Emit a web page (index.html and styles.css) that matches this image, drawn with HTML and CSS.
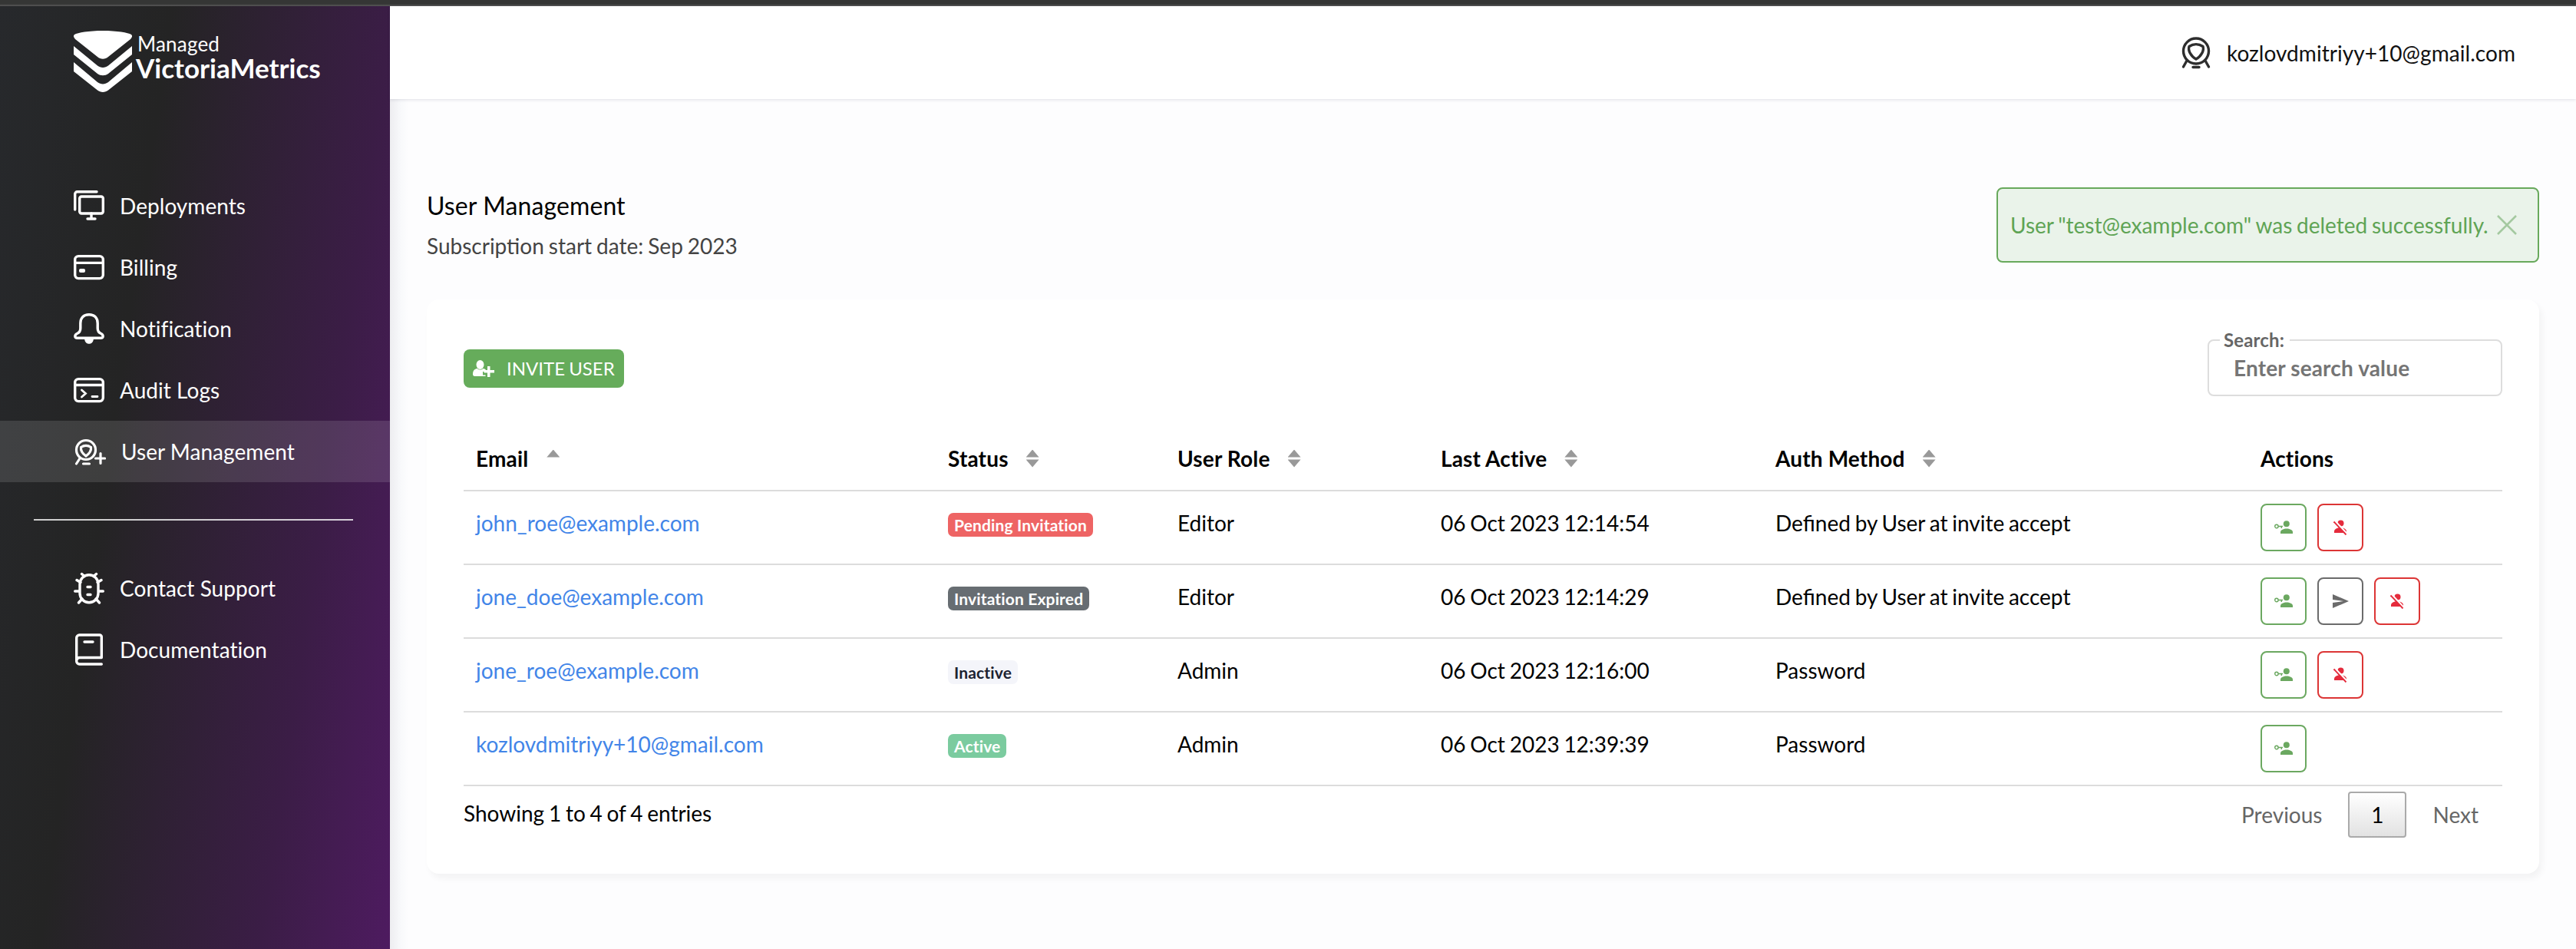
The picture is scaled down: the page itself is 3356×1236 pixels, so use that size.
FILE: index.html
```html
<!DOCTYPE html>
<html lang="en">
<head>
<meta charset="utf-8">
<title>User Management</title>
<link rel="stylesheet" href="styles.css">
</head>
<body>
<svg class="sprite" aria-hidden="true">
  <symbol id="monitor" viewBox="0 0 40 40"><g fill="none" stroke="currentColor" stroke-width="3.4" stroke-linecap="round" stroke-linejoin="round"><path d="M1.7 25V4.7a3 3 0 0 1 3-3H30"/><rect x="7.7" y="8" width="30.6" height="22" rx="2.5"/><path d="M23 30v6M18 37h10"/></g></symbol>
  <symbol id="card" viewBox="0 0 40 40"><g fill="none" stroke="currentColor" stroke-width="3.4"><rect x="1.7" y="5.6" width="36.600" height="29" rx="4.5"/><path d="M2 14.4h36"/></g><rect x="7" y="22" width="8" height="5" rx="2" fill="currentColor"/></symbol>
  <symbol id="bell" viewBox="0 0 40 40"><path d="M20 1.7C12.500 1.700 8.800 6.500 8.800 13v6.500c0 3-1.200 5.500-4 6.700C.8 28 .8 32.300 5 32.300h30c4.200 0 4.200-4.300.2-6.100-2.800-1.200-4-3.700-4-6.700V13C31.200 6.500 27.500 1.700 20 1.700z" fill="none" stroke="currentColor" stroke-width="3.4"/><path d="M14 32h12c0 5-2.500 7.800-6 7.800S14 37 14 32z" fill="currentColor"/></symbol>
  <symbol id="console" viewBox="0 0 40 40"><g fill="none" stroke="currentColor" stroke-width="3.400" stroke-linecap="round"><rect x="1.7" y="5.600" width="36.600" height="29" rx="4.500"/><path d="M2 13.500h36"/><path d="M10.500 20l5 4.500-5 4.500M24 28.500h7" stroke-width="2.800"/></g></symbol>
  <symbol id="useradd" viewBox="0 0 42 40"><g fill="none" stroke="currentColor" stroke-width="3.200" stroke-linecap="round"><circle cx="16" cy="18" r="12.500"/><path d="M9.500 14.500c4-2.600 9-2.600 13 0 .6 4-2.400 8.500-6.500 11.500-4.100-3-7.100-7.500-6.500-11.500z"/><path d="M8 29l-4.500 7M12.500 36h8M35 22.500v13M28.500 29h12"/></g></symbol>
  <symbol id="user" viewBox="0 0 40 42"><g fill="none" stroke="currentColor" stroke-width="3.400" stroke-linecap="round"><circle cx="20" cy="18.500" r="16.500"/><path d="M11 12.500c5.500-3.600 12.500-3.600 18 0 2 5.500-3 13.500-9 16.500-6-3-11-11-9-16.500z"/><path d="M8 31l-4.500 8M32 31l4.500 8M16 39.500h8"/></g></symbol>
  <symbol id="bug" viewBox="0 0 40 42"><g fill="none" stroke="currentColor" stroke-width="3.400" stroke-linecap="round"><rect x="8" y="3.700" width="24" height="36" rx="12"/><path d="M10.500 2.500l3.500 3M29.500 2.500L26 5.500M4 10.500l5 3M36 10.500l-5 3M1.700 25H7M38.300 25H33M6.500 40l4.500-5M33.500 40L29 35M18 19.500h4M18 29.500h4"/></g></symbol>
  <symbol id="book" viewBox="0 0 40 42"><g fill="none" stroke="currentColor" stroke-width="3.400" stroke-linecap="round" stroke-linejoin="round"><path d="M36.300 31.500V4.500a2.500 2.500 0 0 0-2.500-2.500H7.500A3.800 3.800 0 0 0 3.700 5.800v30.400A3.800 3.800 0 0 0 7.500 40h28.800M4 34.500a3.800 3.800 0 0 1 3.500-3h28.800M14 11h11"/></g></symbol>
  <symbol id="invite" viewBox="0 0 28 22"><g fill="currentColor"><ellipse cx="9.500" cy="6" rx="5" ry="6"/><path d="M0 18.500c0-5 2.500-7 5.500-7.500 2.500 2 5.500 2 8 0 1.500.3 2.500.8 3.300 1.600V15H13v4.500h3.500V21H2.500C.8 21 0 20 0 18.500z"/><path d="M19 8h3.500v5H28v3.500h-5.500V22H19v-5.500h-4.500V13H19z"/></g></symbol>
  <symbol id="keyuser" viewBox="0 0 24 18"><g fill="currentColor"><circle cx="15.800" cy="4.300" r="4"/><path d="M8 17v-2c0-3 4.500-4.500 8-4.500s8 1.500 8 4.500v2z"/></g><g fill="none" stroke="currentColor" stroke-width="1.400"><circle cx="2.900" cy="7.500" r="2.200"/><path d="M5 7.500h6M9.300 7.500v2.500"/></g></symbol>
  <symbol id="useroff" viewBox="0 0 18 20"><g fill="currentColor"><circle cx="9.500" cy="4.500" r="4"/><path d="M1 17v-2c0-3 4-4.700 8-4.700 4 0 8 1.700 8 4.700v2z"/></g><path d="M2 1.500L18 18.500" stroke="#fff" stroke-width="2.500"/><path d="M.5 2.500L16.500 19.500" stroke="currentColor" stroke-width="1.900"/></symbol>
  <symbol id="send" viewBox="0 0 21 18"><path d="M0 0l21 9L0 18v-7l14-2L0 7z" fill="currentColor"/></symbol>
</svg>
<div class="topstrip"></div>
<div class="app">
  <aside class="sidebar">
    <div class="brand">
      <svg class="brand-mark" viewBox="0 0 76 80"><g fill="#fff"><path d="M38 0C20 0 5 2.500 1 5c-2 1.500-1 4 1 6l29 23c4 3.500 10 3.500 14 0l29-23c2-2 3-4.500 1-6C71 2.500 56 0 38 0z"/><path d="M0 20l31 25.500c4 3.200 10 3.200 14 0L76 20v11L45 56c-4 3-10 3-14 0L0 31z"/><path d="M0 41l31 26c4 3.200 10 3.200 14 0l31-26v12L45 77.500c-4 3.300-10 3.300-14 0L0 53z"/></g></svg>
      <div class="brand-name"><span class="brand-top">Managed</span><span class="brand-main">VictoriaMetrics</span></div>
    </div>
    <nav class="menu">
      <a class="item"><svg><use href="#monitor"/></svg>Deployments</a>
      <a class="item"><svg><use href="#card"/></svg>Billing</a>
      <a class="item"><svg><use href="#bell"/></svg>Notification</a>
      <a class="item"><svg><use href="#console"/></svg>Audit Logs</a>
      <a class="item active"><svg class="wide"><use href="#useradd"/></svg>User Management</a>
    </nav>
    <hr class="divider">
    <nav class="menu">
      <a class="item"><svg><use href="#bug"/></svg>Contact Support</a>
      <a class="item"><svg><use href="#book"/></svg>Documentation</a>
    </nav>
  </aside>
  <div class="page">
    <header class="header"><svg><use href="#user"/></svg><span>kozlovdmitriyy+10@gmail.com</span></header>
    <main class="main">
      <div class="heading">
        <div>
          <h1>User Management</h1>
          <p class="sub">Subscription start date: Sep 2023</p>
        </div>
        <div class="alert"><span>User "test@example.com" was deleted successfully.</span><svg viewBox="0 0 26 26"><path d="M1 1l24 24M25 1L1 25" stroke="currentColor" stroke-width="2.500"/></svg></div>
      </div>
      <section class="card">
        <div class="tools">
          <button class="invite"><svg><use href="#invite"/></svg>INVITE USER</button>
          <fieldset class="search"><legend>Search:</legend><span>Enter search value</span></fieldset>
        </div>
        <table>
          <colgroup><col class="c1"><col class="c2"><col class="c3"><col class="c4"><col class="c5"><col></colgroup>
          <thead><tr>
            <th>Email<i class="sort up"></i></th><th>Status<i class="sort"></i></th><th>User Role<i class="sort"></i></th><th>Last Active<i class="sort"></i></th><th>Auth Method<i class="sort"></i></th><th>Actions</th>
          </tr></thead>
          <tbody>
            <tr><td><a>john_roe@example.com</a></td><td><span class="badge red">Pending Invitation</span></td><td>Editor</td><td>06 Oct 2023 12:14:54</td><td>Defined by User at invite accept</td>
              <td><div class="actions"><button class="act green"><svg class="k"><use href="#keyuser"/></svg></button><button class="act danger"><svg class="o"><use href="#useroff"/></svg></button></div></td></tr>
            <tr><td><a>jone_doe@example.com</a></td><td><span class="badge gray">Invitation Expired</span></td><td>Editor</td><td>06 Oct 2023 12:14:29</td><td>Defined by User at invite accept</td>
              <td><div class="actions"><button class="act green"><svg class="k"><use href="#keyuser"/></svg></button><button class="act"><svg class="s"><use href="#send"/></svg></button><button class="act danger"><svg class="o"><use href="#useroff"/></svg></button></div></td></tr>
            <tr><td><a>jone_roe@example.com</a></td><td><span class="badge light">Inactive</span></td><td>Admin</td><td>06 Oct 2023 12:16:00</td><td>Password</td>
              <td><div class="actions"><button class="act green"><svg class="k"><use href="#keyuser"/></svg></button><button class="act danger"><svg class="o"><use href="#useroff"/></svg></button></div></td></tr>
            <tr><td><a>kozlovdmitriyy+10@gmail.com</a></td><td><span class="badge ok">Active</span></td><td>Admin</td><td>06 Oct 2023 12:39:39</td><td>Password</td>
              <td><div class="actions"><button class="act green"><svg class="k"><use href="#keyuser"/></svg></button></div></td></tr>
          </tbody>
        </table>
        <div class="foot">
          <span class="info">Showing 1 to 4 of 4 entries</span>
          <div class="pager"><span>Previous</span><b>1</b><span>Next</span></div>
        </div>
      </section>
    </main>
  </div>
</div>
</body>
</html>
```
FILE: styles.css
```css
* { box-sizing: border-box; }
body { margin: 0; height: 1236px; overflow: hidden; font: 28px/34px Lato, sans-serif; color: #000; background: #fdfdfe; display: flex; flex-direction: column; }
button { font: inherit; margin: 0; cursor: pointer; }
.sprite { display: none; }
.topstrip { height: 8px; flex: none; background: linear-gradient(#353635 0 5px, #5a5a5a 8px); }
.app { flex: 1; display: flex; min-height: 0; }

.sidebar { width: 508px; flex: none; color: #fff; background: linear-gradient(98deg, #27292c 0%, #242424 33%, #3b1d46 75%, #4e1b60 100%); }
.brand { display: flex; padding: 32px 0 0 96px; height: 220px; }
.brand-mark { width: 76px; height: 80px; flex: none; }
.brand-name { display: flex; flex-direction: column; padding: 1px 0 0 5px; }
.brand-top { font-size: 26px; line-height: 32px; padding-left: 2px; letter-spacing: .2px; }
.brand-main { font-size: 35px; line-height: 34px; font-weight: 700; margin-top: -2px; }
.item { display: flex; align-items: center; height: 80px; padding-left: 96px; gap: 20px; letter-spacing: .05px; }
.item svg { width: 40px; height: 42px; }
.item svg.wide { width: 42px; height: 40px; }
.active { background: rgba(255,255,255,.12); }
.divider { border: 0; height: 2px; margin: 48px 48px 48px 44px; background: rgba(255,255,255,.78); }

.page { flex: 1; min-width: 0; display: flex; flex-direction: column; }
.header { height: 121px; flex: none; background: #fff; display: flex; justify-content: flex-end; align-items: center; gap: 20px; padding-right: 79px; box-shadow: 0 1px 4px rgba(40,40,80,.14); color: #111; position: relative; letter-spacing: .05px; }
.header svg { width: 40px; height: 42px; color: #2e2e2e; }
.main { flex: 1; padding: 115px 48px 0; background: linear-gradient(90deg, #ededf0 0, #f8f9fb 14px, #fdfdfe 24px); }
.heading { display: flex; justify-content: space-between; height: 146px; }
h1 { margin: 5px 0 0; font-weight: 400; font-size: 32px; line-height: 38px; letter-spacing: .1px; }
.sub { margin: 16px 0 0; color: #444; word-spacing: -1.2px; }
.alert { display: flex; align-items: center; height: 98px; width: 707px; padding: 0 27px 0 16px; justify-content: space-between; color: #5fa455; background: #eaf3ea; border: 2px solid #68a95c; border-radius: 8px; word-spacing: -1.4px; }
.alert svg { width: 26px; height: 26px; color: #a4c9a0; }

.card { background: #fff; height: 748px; border-radius: 16px; padding: 38px 48px 0; box-shadow: 4px 6px 8px rgba(0,0,0,.045); }
.tools { display: flex; justify-content: space-between; height: 132px; }
.invite { margin-top: 27px; width: 209px; height: 50px; display: flex; align-items: center; gap: 16px; padding: 0 0 0 12px; border: 0; border-radius: 8px; background: #66ac5b; color: #fff; font-size: 24px; white-space: nowrap; word-spacing: -1px; }
.invite svg { width: 28px; height: 22px; }
.search { margin: 0; width: 384px; height: 88px; padding: 0 0 0 32px; border: 2px solid #ddd; border-radius: 8px; color: #757575; font-weight: 700; letter-spacing: .15px; }
.search legend { font-size: 24px; line-height: 30px; padding: 0 7px 0 5px; margin-left: -18px; color: #666; }
.search span { display: block; margin-top: 4px; }

table { width: 2656px; table-layout: fixed; border-collapse: separate; border-spacing: 0; }
.c1 { width: 615px; } .c2 { width: 299px; } .c3 { width: 343px; } .c4 { width: 436px; } .c5 { width: 632px; }
th { text-align: left; height: 80px; padding: 0 0 5px 16px; border-bottom: 2px solid #dcdcdc; font-weight: 700; letter-spacing: .15px; }
td { height: 96px; padding: 24px 0 0 16px; vertical-align: top; border-bottom: 2px solid #dcdcdc; white-space: nowrap; word-spacing: -1.4px; }
td:last-child { padding-top: 16px; }
td a { color: #4285e8; }
.sort { display: inline-block; width: 17px; height: 23px; margin-left: 23px; vertical-align: -1px; background: #999; clip-path: polygon(50% 0, 100% 43%, 0 43%, 0 57%, 100% 57%, 50% 100%, 0 57%, 0 43%); }
.sort.up { margin-left: 24px; clip-path: polygon(50% 0, 100% 43%, 0 43%); }
.badge { display: inline-block; height: 31px; padding: 0 8px; border-radius: 7px; font-size: 21px; line-height: 32px; font-weight: 700; color: #fff; margin-top: 4px; vertical-align: top; word-spacing: 0; letter-spacing: .15px; }
.red { background: #ee6464; } .gray { background: #676d72; } .light { background: #f4f5fa; color: #1c2230; } .ok { background: #7bcb9f; }
.actions { display: flex; gap: 14px; }
.act { width: 60px; height: 62px; padding: 0; display: flex; align-items: center; justify-content: center; background: #fff; border: 2px solid #6b6b6b; border-radius: 8px; color: #6b6b6b; }
.act.green { border-color: #6ba860; color: #6ba860; }
.act.danger { border-color: #dc3535; color: #e52b3c; }
.k { width: 24px; height: 18px; } .o { width: 18px; height: 20px; } .s { width: 21px; height: 18px; }
.foot { display: flex; justify-content: space-between; padding-top: 7px; }
.info { padding-top: 11px; word-spacing: -1.4px; }
.pager { display: flex; align-items: center; color: #666; padding-right: 31px; gap: 34px; height: 60px; }
.pager b { width: 76px; height: 60px; line-height: 57px; text-align: center; font-weight: 400; color: #000; border: 2px solid #aaa; border-radius: 4px; background: linear-gradient(#fff, #e2e2e2); }
```
